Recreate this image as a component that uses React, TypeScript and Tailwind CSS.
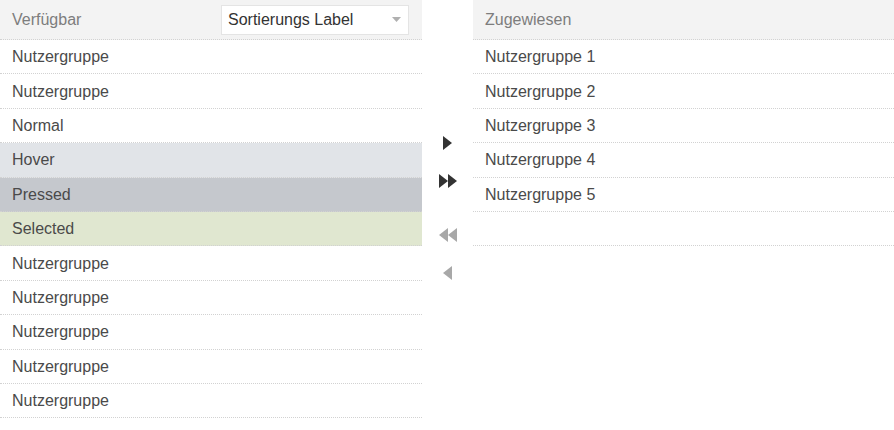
import React from "react";

const leftRows: { label: string; cls: string }[] = [
  { label: "Nutzergruppe", cls: "bg-white" },
  { label: "Nutzergruppe", cls: "bg-white" },
  { label: "Normal", cls: "bg-white" },
  { label: "Hover", cls: "bg-[#e1e4e8]" },
  { label: "Pressed", cls: "bg-[#c5c8cd]" },
  { label: "Selected", cls: "bg-[#e0e7d0]" },
  { label: "Nutzergruppe", cls: "bg-white" },
  { label: "Nutzergruppe", cls: "bg-white" },
  { label: "Nutzergruppe", cls: "bg-white" },
  { label: "Nutzergruppe", cls: "bg-white" },
  { label: "Nutzergruppe", cls: "bg-white" },
];

const rightRows = [
  "Nutzergruppe 1",
  "Nutzergruppe 2",
  "Nutzergruppe 3",
  "Nutzergruppe 4",
  "Nutzergruppe 5",
  "",
];

function Row({ label, cls }: { label: string; cls: string }) {
  return (
    <div
      className={`h-[34.4px] flex items-center pl-3 pt-[1px] border-b border-dotted border-[#d2d2d2] text-[16px] text-[#4a4a4a] ${cls}`}
    >
      {label}
    </div>
  );
}

function Tri({ dir, color }: { dir: "r" | "l"; color: string }) {
  return (
    <svg width="9" height="14" viewBox="0 0 9 14">
      {dir === "r" ? (
        <polygon points="0,0 9,7 0,14" fill={color} />
      ) : (
        <polygon points="9,0 0,7 9,14" fill={color} />
      )}
    </svg>
  );
}

export default function App() {
  return (
    <div
      className="w-[894px] h-[430px] bg-white flex"
      style={{ fontFamily: '"Liberation Sans", Arial, sans-serif' }}
    >
      <div className="w-[422px] flex flex-col">
        <div className="h-[40px] bg-[#f3f3f3] border-b border-dotted border-[#d2d2d2] flex items-center justify-between pl-3 pr-[13px]">
          <span className="text-[16px] text-[#7d7d7d]">Verfügbar</span>
          <div className="w-[188px] h-[30px] bg-white border border-[#e4e4e4] flex items-center justify-between pl-[6px] pr-[7px]">
            <span className="text-[16px] text-[#333]">Sortierungs Label</span>
            <svg width="9" height="5" viewBox="0 0 9 5">
              <polygon points="0,0 9,0 4.5,5" fill="#b0b0b0" />
            </svg>
          </div>
        </div>
        {leftRows.map((r, i) => (
          <Row key={i} label={r.label} cls={r.cls} />
        ))}
      </div>
      <div className="w-[51px] flex flex-col items-center pt-[136px]">
        <div className="h-[14px] flex items-center">
          <Tri dir="r" color="#333" />
        </div>
        <div className="h-[14px] mt-[24px] flex items-center">
          <Tri dir="r" color="#333" />
          <Tri dir="r" color="#333" />
        </div>
        <div className="h-[14px] mt-[40px] flex items-center">
          <Tri dir="l" color="#a8a8a8" />
          <Tri dir="l" color="#a8a8a8" />
        </div>
        <div className="h-[14px] mt-[24px] flex items-center">
          <Tri dir="l" color="#a8a8a8" />
        </div>
      </div>
      <div className="flex-1 flex flex-col">
        <div className="h-[40px] bg-[#f3f3f3] border-b border-dotted border-[#d2d2d2] flex items-center pl-3">
          <span className="text-[16px] text-[#7d7d7d]">Zugewiesen</span>
        </div>
        {rightRows.map((r, i) => (
          <Row key={i} label={r} cls="bg-white" />
        ))}
      </div>
    </div>
  );
}
